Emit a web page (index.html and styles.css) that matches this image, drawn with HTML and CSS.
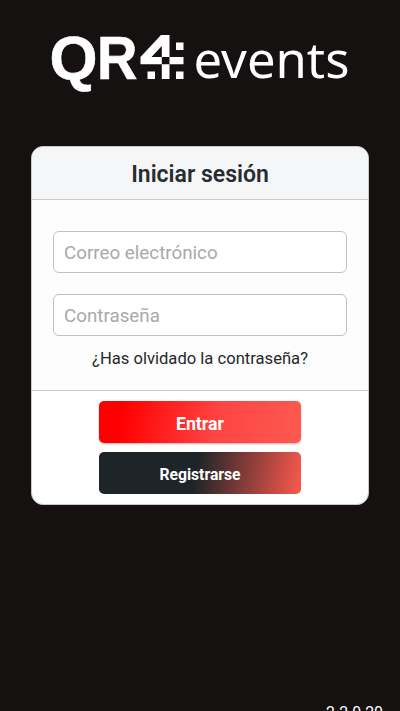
FILE: index.html
```html
<!DOCTYPE html>
<html lang="es">
<head>
<meta charset="utf-8">
<title>QR4 events</title>
<link rel="stylesheet" href="styles.css">
</head>
<body>
<main class="screen">
  <svg class="logo" viewBox="50 15 300 85" role="img" aria-label="QR4 events">
    <text class="logo-qr" x="49.5" y="78.5" textLength="48" lengthAdjust="spacingAndGlyphs">Q</text>
    <text class="logo-qr" x="97" y="78.5" textLength="40.5" lengthAdjust="spacingAndGlyphs">R</text>
    <path fill-rule="evenodd" d="M161 35h8.5v22h14v7.3h-14V79h-7.7V64.3H140.5V57zM161.8 46L151.5 57h10.3zM161.8 57v7.3h7.7V57zM176 42.5h7.5V50H176zM147.5 71.5h7.5V79h-7.5zM176 71.5h7.5V79H176z"/>
    <text class="logo-events" x="193.5" y="78.3" textLength="156" lengthAdjust="spacingAndGlyphs">events</text>
  </svg>
  <form class="card">
    <h1 class="card-title">Iniciar sesión</h1>
    <div class="fields">
      <input class="field" type="email" placeholder="Correo electrónico">
      <input class="field" type="password" placeholder="Contraseña">
      <a class="forgot">¿Has olvidado la contraseña?</a>
    </div>
    <div class="actions">
      <button class="button enter" type="button">Entrar</button>
      <button class="button register" type="button">Registrarse</button>
    </div>
  </form>
  <div class="version">2.2.0.20</div>
</main>
</body>
</html>
```
FILE: styles.css
```css
* { box-sizing: border-box; }
body {
  margin: 0;
  background: #151110;
  font-family: Roboto, sans-serif;
  overflow: hidden;
}
.screen {
  display: flex;
  flex-direction: column;
  align-items: center;
  height: 711px;
  padding-top: 15px;
  overflow: hidden;
}
.logo {
  flex: none;
  width: 300px;
  height: 85px;
  overflow: visible;
  fill: #fff;
}
.logo-qr {
  font: bold 62px "Liberation Sans", sans-serif;
  stroke: #fff;
  stroke-width: 0.6px;
}
.logo-events { font: 50px "Noto Sans", sans-serif; }
.card {
  flex: none;
  width: 338px;
  height: 359px;
  margin-top: 46px;
  border: 1px solid #c8c8c8;
  border-radius: 12px;
  background: #fff;
  overflow: hidden;
}
.card-title {
  height: 53px;
  margin: 0;
  border-bottom: 1px solid #c9cacb;
  background: #f5f6f7;
  color: #272c31;
  font-size: 23px;
  font-weight: 600;
  line-height: 56px;
  text-align: center;
}
.fields {
  display: flex;
  flex-direction: column;
  height: 191px;
  padding: 31px 21px 0;
  border-bottom: 1px solid #c9cacb;
  background: #fdfdfd;
}
.field {
  width: 294px;
  height: 42px;
  margin: 0 0 21px;
  padding: 2px 10px 0;
  border: 1px solid #bfc0c1;
  border-radius: 6px;
  background: #fff;
  font: 18.8px Roboto, sans-serif;
}
.field::placeholder { color: #a9a9a9; opacity: 1; }
.forgot {
  margin-top: -8px;
  color: #24282b;
  font-size: 16.6px;
  line-height: 20px;
  text-align: center;
}
.actions {
  display: flex;
  flex-direction: column;
  align-items: center;
  gap: 9px;
  padding-top: 10px;
}
.button {
  width: 202px;
  height: 42px;
  padding: 2px 0 0;
  border: 0;
  border-radius: 5px;
  color: #fff;
  font-family: Roboto, sans-serif;
  font-weight: 700;
}
.enter {
  background: linear-gradient(100deg, #f00 12%, #ff4444 58%, #fb5a50);
  box-shadow: 0 1px 2px #d9aaaa;
  font-size: 17.8px;
}
.register {
  background: linear-gradient(100deg, #1e2528 48%, #f4564c 98%);
  font-size: 15.7px;
}
.version {
  flex: none;
  align-self: flex-end;
  margin: 199px 17px 0 0;
  color: #fff;
  font-size: 15.8px;
  line-height: 18px;
}
```
